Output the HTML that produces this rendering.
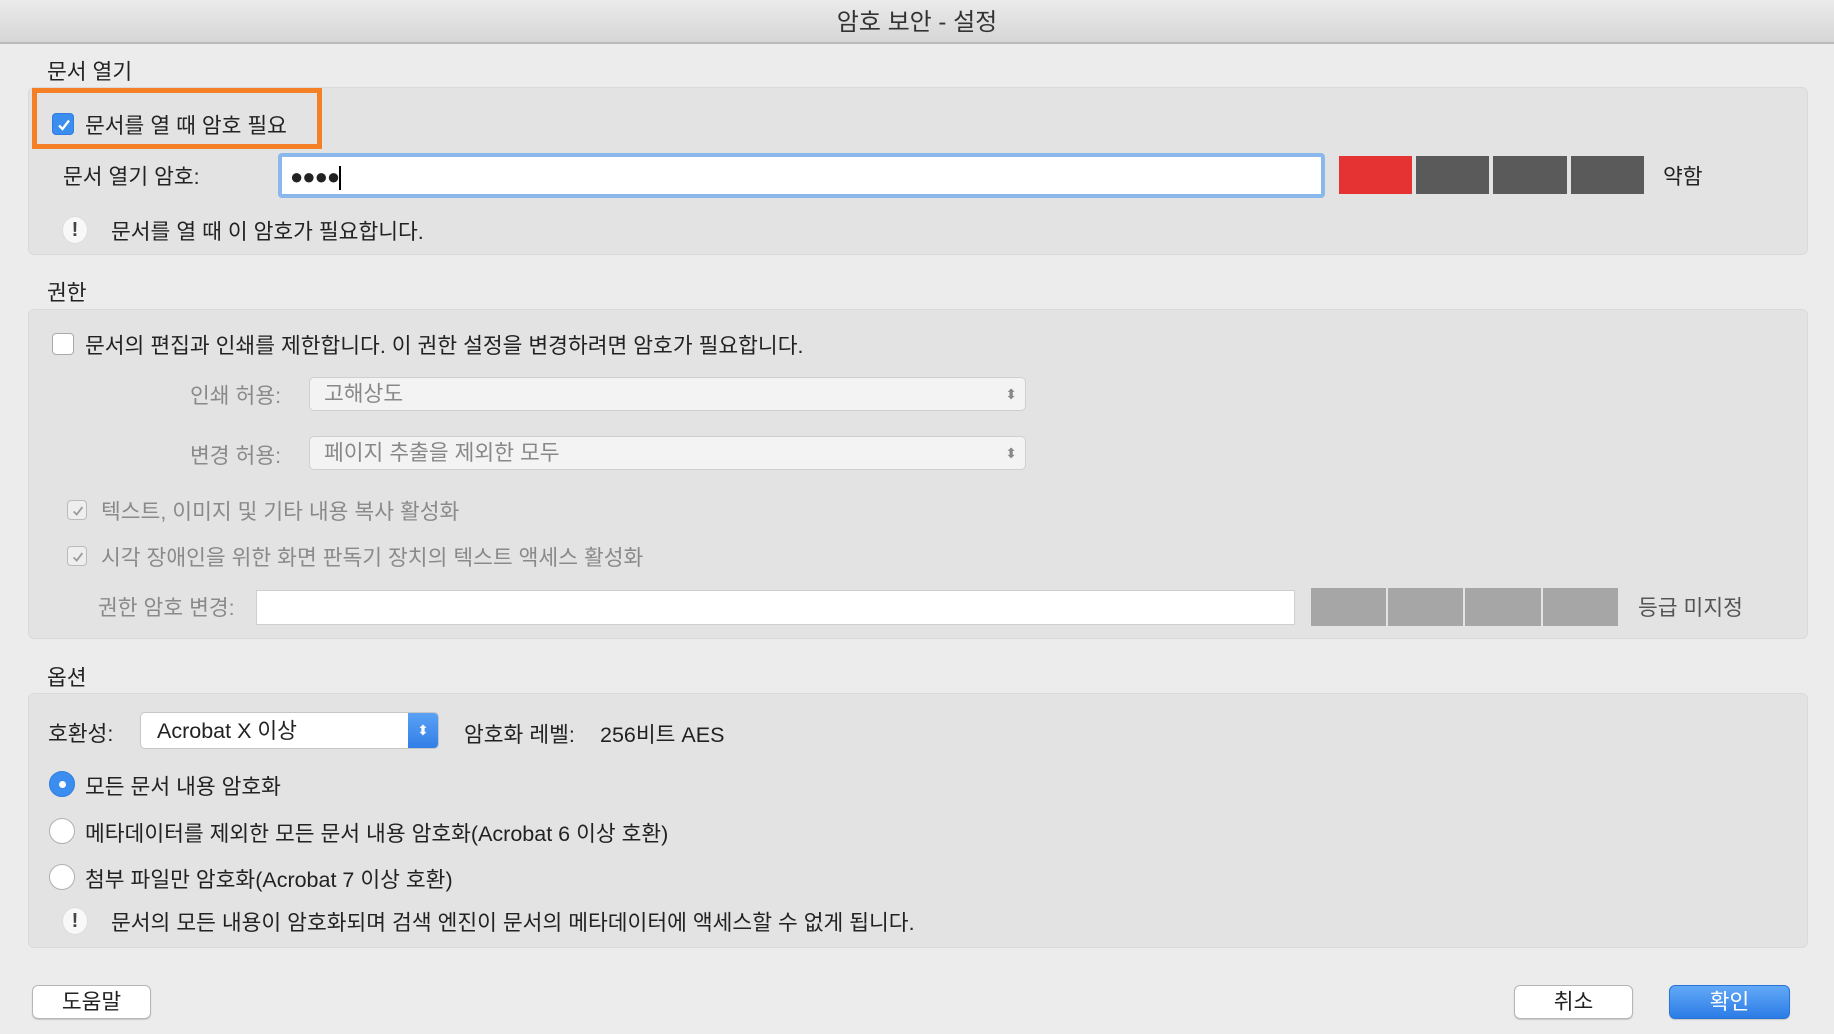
<!DOCTYPE html>
<html><head><meta charset="utf-8"><style>
*{box-sizing:border-box;margin:0;padding:0}
body{width:1834px;height:1034px;background:#ececec;font-family:"Liberation Sans","Noto Sans CJK KR",sans-serif;font-size:21.5px;color:#222;position:relative;overflow:hidden}
.a{position:absolute;white-space:nowrap;line-height:24px;margin-top:2px}
.title{position:absolute;left:0;top:0;width:1834px;height:44px;background:linear-gradient(#ebebeb,#d6d6d6);border-bottom:2px solid #b9b9b9;text-align:center;line-height:46px;font-size:24px;color:#333}
.panel{position:absolute;left:28px;width:1780px;background:#e3e3e3;border:1px solid #dadada;border-radius:6px}
.cb{position:absolute;width:22px;height:22px;border:1px solid #aaa;background:#fff;border-radius:4px}
.cb.on{background:#3b8df0;border-color:#2f7de0}
.cb.dis{background:#eee;border-color:#bbb;width:20px;height:20px}
.cb svg{position:absolute;left:3px;top:3px}
.gray{color:#8a8a8a}
.sel{position:absolute;background:#f3f3f3;border:1px solid #cfcfcf;border-radius:5px;color:#888;padding-left:14px;line-height:32px}
.bar{position:absolute;height:38px}
.btn{position:absolute;height:34px;background:#fff;border:1px solid #b5b5b5;border-radius:6px;text-align:center;line-height:32px;box-shadow:0 1px 1px rgba(0,0,0,.15)}
.radio{position:absolute;width:26px;height:26px;border-radius:50%;border:1px solid #b0b0b0;background:#fff}
.warn{position:absolute;width:26px;height:28px;border-radius:50%;background:#f8f8f8;border:1px solid #ddd;text-align:center;font-weight:bold;line-height:26px;font-size:20px;color:#444}
</style></head><body>
<div class="title">암호 보안 - 설정</div>

<div class="a" style="left:47px;top:58px">문서 열기</div>
<div class="panel" style="top:87px;height:168px"></div>
<div style="position:absolute;left:32px;top:88px;width:290px;height:61px;border:5px solid #f57f24"></div>
<div class="cb on" style="left:52px;top:113px"><svg width="16" height="16" viewBox="0 0 16 16"><path d="M3 8.5l3.5 3.5L13 3.5" stroke="#fff" stroke-width="2.3" fill="none"/></svg></div>
<div class="a" style="left:85px;top:112px">문서를 열 때 암호 필요</div>
<div class="a" style="left:63px;top:163px">문서 열기 암호:</div>
<div style="position:absolute;left:278px;top:153px;width:1047px;height:45px;border:4px solid #8ab8ec;border-radius:4px;background:#fff"></div>
<div class="a" style="left:290px;top:163px;font-size:22px;letter-spacing:-1px">●●●●<span style="display:inline-block;width:2px;height:24px;background:#000;vertical-align:middle"></span></div>
<div class="bar" style="left:1339px;top:156px;width:73px;background:#e53232"></div>
<div class="bar" style="left:1416px;top:156px;width:73px;background:#5a5a5a"></div>
<div class="bar" style="left:1493px;top:156px;width:74px;background:#5a5a5a"></div>
<div class="bar" style="left:1571px;top:156px;width:73px;background:#5a5a5a"></div>
<div class="a" style="left:1663px;top:163px">약함</div>
<div class="warn" style="left:62px;top:216px">!</div>
<div class="a" style="left:111px;top:218px">문서를 열 때 이 암호가 필요합니다.</div>

<div class="a" style="left:47px;top:279px">권한</div>
<div class="panel" style="top:309px;height:330px"></div>
<div class="cb" style="left:52px;top:333px"></div>
<div class="a" style="left:85px;top:332px">문서의 편집과 인쇄를 제한합니다. 이 권한 설정을 변경하려면 암호가 필요합니다.</div>
<div class="a gray" style="left:190px;top:382px">인쇄 허용:</div>
<div class="sel" style="left:309px;top:377px;width:717px;height:34px">고해상도<span style="position:absolute;right:8px;top:0;font-size:14px">⬍</span></div>
<div class="a gray" style="left:190px;top:442px">변경 허용:</div>
<div class="sel" style="left:309px;top:436px;width:717px;height:34px">페이지 추출을 제외한 모두<span style="position:absolute;right:8px;top:0;font-size:14px">⬍</span></div>
<div class="cb dis" style="left:67px;top:500px"><svg width="14" height="14" viewBox="0 0 16 16"><path d="M3 8.5l3.5 3.5L13 3.5" stroke="#999" stroke-width="2" fill="none"/></svg></div>
<div class="a gray" style="left:101px;top:498px">텍스트, 이미지 및 기타 내용 복사 활성화</div>
<div class="cb dis" style="left:67px;top:546px"><svg width="14" height="14" viewBox="0 0 16 16"><path d="M3 8.5l3.5 3.5L13 3.5" stroke="#999" stroke-width="2" fill="none"/></svg></div>
<div class="a gray" style="left:101px;top:544px">시각 장애인을 위한 화면 판독기 장치의 텍스트 액세스 활성화</div>
<div class="a gray" style="left:98px;top:594px">권한 암호 변경:</div>
<div style="position:absolute;left:256px;top:590px;width:1039px;height:35px;background:#fff;border:1px solid #cfcfcf"></div>
<div class="bar" style="left:1311px;top:588px;width:75px;background:#a6a6a6"></div>
<div class="bar" style="left:1388px;top:588px;width:75px;background:#a6a6a6"></div>
<div class="bar" style="left:1465px;top:588px;width:76px;background:#a6a6a6"></div>
<div class="bar" style="left:1543px;top:588px;width:75px;background:#a6a6a6"></div>
<div class="a" style="left:1638px;top:594px;color:#555">등급 미지정</div>

<div class="a" style="left:47px;top:664px">옵션</div>
<div class="panel" style="top:693px;height:255px"></div>
<div class="a" style="left:48px;top:720px">호환성:</div>
<div style="position:absolute;left:140px;top:712px;width:299px;height:37px;background:#fff;border:1px solid #c6c6c6;border-radius:5px;overflow:hidden"><span class="a" style="left:16px;top:4px;color:#222">Acrobat X 이상</span><div style="position:absolute;right:0;top:0;width:30px;height:37px;background:linear-gradient(#5aa2f5,#2f7de6);color:#fff;font-size:14px;text-align:center;line-height:35px">⬍</div></div>
<div class="a" style="left:464px;top:721px">암호화 레벨:</div>
<div class="a" style="left:600px;top:721px">256비트 AES</div>
<div class="radio" style="left:49px;top:771px;background:#3b8df0;border-color:#2f7de0"><div style="position:absolute;left:9px;top:9px;width:7px;height:7px;border-radius:50%;background:#fff"></div></div>
<div class="a" style="left:85px;top:773px">모든 문서 내용 암호화</div>
<div class="radio" style="left:49px;top:818px"></div>
<div class="a" style="left:85px;top:820px">메타데이터를 제외한 모든 문서 내용 암호화(Acrobat 6 이상 호환)</div>
<div class="radio" style="left:49px;top:864px"></div>
<div class="a" style="left:85px;top:866px">첨부 파일만 암호화(Acrobat 7 이상 호환)</div>
<div class="warn" style="left:62px;top:907px">!</div>
<div class="a" style="left:111px;top:909px">문서의 모든 내용이 암호화되며 검색 엔진이 문서의 메타데이터에 액세스할 수 없게 됩니다.</div>

<div class="btn" style="left:32px;top:985px;width:119px">도움말</div>
<div class="btn" style="left:1514px;top:985px;width:119px">취소</div>
<div class="btn" style="left:1669px;top:985px;width:121px;background:linear-gradient(#62a9f7,#2c7ce6);border-color:#2a74d8;color:#fff">확인</div>
</body></html>
